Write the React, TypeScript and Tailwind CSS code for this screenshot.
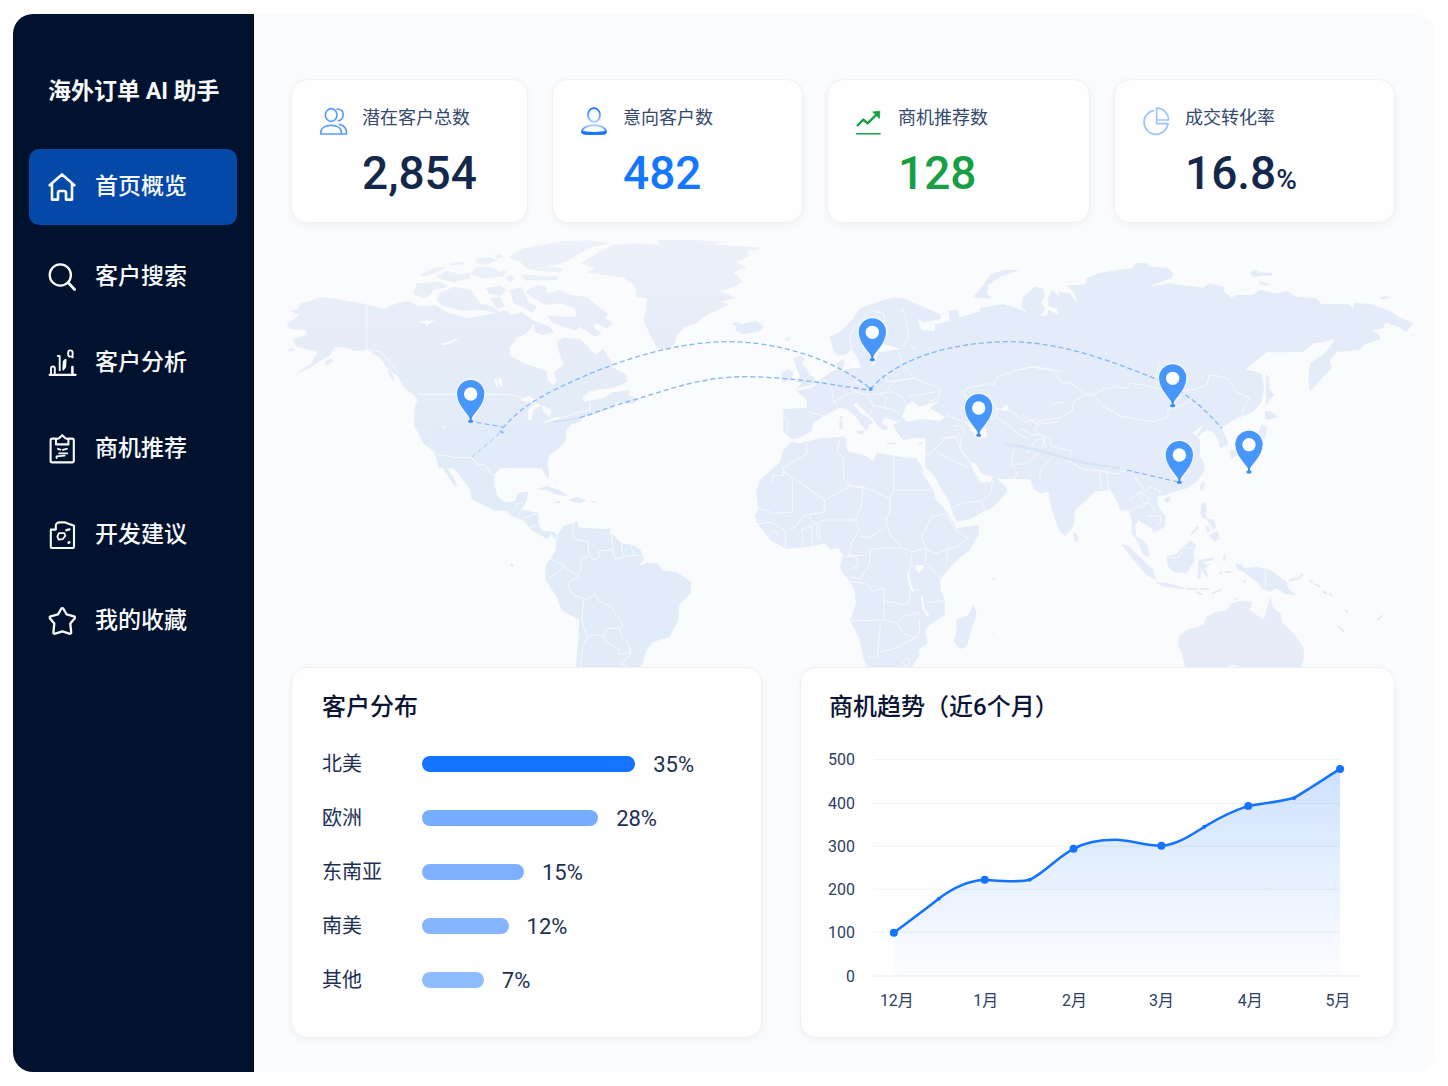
import type { ReactNode } from "react";

const stroke = {
  fill: "none",
  stroke: "currentColor",
  strokeLinecap: "round" as const,
  strokeLinejoin: "round" as const,
};

function NavIcon({ children }: { children: ReactNode }) {
  return (
    <svg viewBox="0 0 28 28" className="h-7 w-7 shrink-0 overflow-visible" strokeWidth="2.3" aria-hidden="true" {...stroke}>
      {children}
    </svg>
  );
}

function StatIcon({ children, className }: { children: ReactNode; className: string }) {
  return (
    <svg viewBox="0 0 28 28" className={`mt-[3px] h-7 w-7 shrink-0 overflow-visible ${className}`} strokeWidth="1.7" aria-hidden="true" {...stroke}>
      {children}
    </svg>
  );
}

const navItems = [
  {
    label: "首页概览",
    icon: (
      <NavIcon>
        <path d="M1.600 12.200 14 1.400l12.400 10.800M4 11v15.600h6V20a2 2 0 0 1 2-2h4a2 2 0 0 1 2 2v6.600h6V11" strokeWidth="2.600" />
      </NavIcon>
    ),
  },
  {
    label: "客户搜索",
    icon: (
      <NavIcon>
        <circle cx="12.3" cy="12" r="10.6" />
        <path d="m20 19.600 6.600 6.800" strokeWidth="2.800" />
      </NavIcon>
    ),
  },
  {
    label: "客户分析",
    icon: (
      <NavIcon>
        <g strokeWidth="1.9">
          <path d="M1.600 25.800h26" strokeWidth="2.200" />
          <path d="M3 25.600v-6.200a1.900 1.900 0 0 1 3.800 0v6.200" />
          <path d="M9.800 7h1.900v14.200" />
          <path d="m17.600 10.800-.4 7-1.900 2.600.5-8Z" />
          <path d="M24.600 8.400V3.500c0-1.300-.9-2.100-2.200-2.100s-2.200.9-2.200 2.300v1.700c0 1.400.8 2.200 2.200 2.200h2.200" />
          <path d="M24.400 18v7.600" strokeWidth="2.600" />
        </g>
      </NavIcon>
    ),
  },
  {
    label: "商机推荐",
    icon: (
      <NavIcon>
        <g strokeWidth="2.1">
          <path d="M8 3.600H4.200a1.600 1.600 0 0 0-1.600 1.600v20.600a1.600 1.600 0 0 0 1.600 1.600h20a1.600 1.600 0 0 0 1.600-1.600V5.200a1.600 1.600 0 0 0-1.600-1.600h-3.800" />
          <path d="M8 9.400V4.200l3-1L14.200.200l3.200 3 3 1v5.200Z" />
          <path d="m10 13.800 2.200.8M14.600 14.800l4.200-1M11.200 18.400h8M8.600 23v-1.600l8-.8" strokeWidth="1.900" />
        </g>
      </NavIcon>
    ),
  },
  {
    label: "开发建议",
    icon: (
      <NavIcon>
        <g strokeWidth="2.1">
          <path d="M2.800 8.600h5V4.800c0-2 1.600-3.400 4-3.400h5.400L26 4.800v21a1.200 1.200 0 0 1-1.200 1.200H4a1.200 1.200 0 0 1-1.200-1.200Z" />
          <path d="M11 12.200h5.400l1 2.600-2.800 3.400-4 .4-1.200-3.200Z" strokeWidth="1.800" />
          <path d="m18.400 9.200 3-.8M20.600 21.800l.8-.6" strokeWidth="2.400" />
        </g>
      </NavIcon>
    ),
  },
  {
    label: "我的收藏",
    icon: (
      <NavIcon>
        <path d="M13.200 1.700a1.400 1.400 0 0 1 2.200 0l3.200 5.700 7.400 1.900a1.300 1.300 0 0 1 .6 2.100l-4.300 5.200.9 8.700a1.300 1.300 0 0 1-1.900 1.300l-7-2.200-7 2.200a1.300 1.300 0 0 1-1.900-1.300l.9-8.700L2 11.400a1.300 1.300 0 0 1 .6-2.100L10 7.400Z" />
      </NavIcon>
    ),
  },
];

const stats = [
  {
    label: "潜在客户总数",
    value: "2,854",
    unit: "",
    color: "text-[#14284b]",
    icon: (
      <StatIcon className="text-[#5b9dff]">
        <ellipse cx="11.2" cy="8" rx="5.8" ry="6.4" />
        <path d="M.8 27v-1.400c0-4.400 4.200-7.200 10.400-7.200s10.200 2.800 10.200 7.200V27Z" />
        <path d="M17 2c4 0 6.200 2.200 6.200 5.400 0 2.800-1.800 5.600-4.800 6.400M19.400 17.400c4.600.8 7.200 4.200 7.200 9.600h-4.400" />
      </StatIcon>
    ),
  },
  {
    label: "意向客户数",
    value: "482",
    unit: "",
    color: "text-[#1477ff]",
    icon: (
      <StatIcon className="text-[#1477ff]">
        <defs>
          <linearGradient id="head" x1="0" y1="0" x2="0" y2="1">
            <stop offset="0" stopColor="#1477ff" />
            <stop offset="1" stopColor="#a9ccff" />
          </linearGradient>
          <linearGradient id="shoulders" x1="0" y1="0" x2="0" y2="1">
            <stop offset="0" stopColor="#a9ccff" />
            <stop offset=".7" stopColor="#1477ff" />
          </linearGradient>
        </defs>
        <ellipse cx="13" cy="8" rx="6" ry="6.800" stroke="url(#head)" strokeWidth="1.800" />
        <path d="M1 24.800c0-3.800 5-6.600 12-6.600s12 2.800 12 6.600c0 1.400-1.200 2-3 2H4c-1.800 0-3-.6-3-2Z" stroke="url(#shoulders)" />
        <path d="M2 25.400c3 1.200 19 1.200 22 0" strokeWidth="2.800" />
      </StatIcon>
    ),
  },
  {
    label: "商机推荐数",
    value: "128",
    unit: "",
    color: "text-[#16a043]",
    icon: (
      <StatIcon className="text-[#16a043]">
        <path d="m1 19 6.400-6.400 4.200 3.800L22 6" strokeWidth="2.400" strokeLinecap="butt" />
        <path d="m17 5 6.800-.8-.4 7Z" fill="currentColor" strokeWidth=".8" />
        <path d="M.6 26.800h23.600" strokeWidth="1.400" />
      </StatIcon>
    ),
  },
  {
    label: "成交转化率",
    value: "16.8",
    unit: "%",
    color: "text-[#14284b]",
    icon: (
      <StatIcon className="text-[#9fc3ff]">
        <path d="M10.400 3.600A12 12 0 1 0 25 16.600H13.600v-2" />
        <path d="M13.600 1.200A12 12 0 0 1 25.600 13H13.600Z" />
      </StatIcon>
    ),
  },
];

const regions = [
  { name: "北美", value: "35%", bar: "w-[69%] bg-[#1473ff]" },
  { name: "欧洲", value: "28%", bar: "w-[57%] bg-[#76adff]" },
  { name: "东南亚", value: "15%", bar: "w-[33%] bg-[#7db1ff]" },
  { name: "南美", value: "12%", bar: "w-[28%] bg-[#85b5ff]" },
  { name: "其他", value: "7%", bar: "w-[20%] bg-[#8fbbff]" },
];

const pins = [
  [572, 559],
  [1777, 374],
  [2096, 601],
  [2678, 512],
  [2698, 742],
  [2907, 711],
];

function WorldMap() {
  return (
    <svg viewBox="-78 -36 3543 1332" className="block h-auto w-full" role="img" aria-label="全球客户分布地图">
      <defs>
        <linearGradient id="land" gradientUnits="userSpaceOnUse" x1="0" y1="0" x2="0" y2="700">
          <stop offset="0" stopColor="#edf2f9" />
          <stop offset=".4" stopColor="#e6edf8" />
          <stop offset="1" stopColor="#e2ebf8" />
        </linearGradient>
      </defs>

      {/* North America, the Arctic islands and Greenland */}
      <g fill="url(#land)">
        <path d="M120 185 90 198 62 205 55 222 30 228 58 240 20 268 30 282 78 285 80 300 38 312 50 335 78 342 112 352 95 385 38 422 90 398 125 375 150 360 165 335 200 338 225 348 262 345 300 368 330 405 355 425 370 455 400 478 412 495 403 520 402 570 430 625 462 650 478 700 800 700 808 662 850 628 845 600 875 568 905 560 905 545 940 538 1000 518 1012 502 1060 508 1076 492 1045 480 1050 465 1000 472 970 490 915 500 905 490 930 468 1000 458 1042 440 1040 420 1000 398 990 375 970 342 945 360 925 335 900 312 850 308 830 320 838 355 852 390 820 412 830 440 818 450 802 432 800 408 740 388 690 362 688 340 710 310 740 295 765 262 750 250 725 232 690 240 680 225 640 235 565 250 500 232 470 212 415 212 385 198 350 205 310 222 260 208 215 200 160 190Z" />
        <path d="m410 145 70-5 25 15-45 10-10 15-20 10-30-12ZM480 175l40-20 55 10 25 40 40 10 20 20-60-10-50 3-70-18-10-20ZM420 120l40-22 40-3-30 17-40 13ZM470 125l30-17 45 10 25-6v18l-50 12-40-10ZM585 72l45-5 25 8-35 14-30-4ZM590 95h40l30 15 20-5-10 20-60 5-40-12ZM505 84l45-4v8l-35 3ZM640 62l20-6 10 8-15 6Z" />
        <path d="m685 65 45-25 120-22 80-2 60 9-50 10-50 25-30 20-60 15 50 5-10 12-60-4-40-8-20-20-20-5ZM720 122l20-4 60 7 35-3-5 14h-90ZM675 125l20-5 12 12-20 8ZM615 160l45-8 20 12-20 18-30-4ZM690 165l35-10 20 45 25 15-15 20-25-20-30-10ZM630 190l30-5 15 30-25 5ZM762 258l48 17 12 17-34 8-24-10ZM735 250l-10 20 22 8Z" />
        <path d="m735 170 35-20 30 5v20l40-10 30 15 50 5 40 35 25 15-10 15 25 15-20 15-30-15-10 10 25 20-20 10-45-30-15 10-35-10-30-10-20-25 50 5 40 0-5-25-45-15-40 5-30-15Z" />
        <path d="m900 85 60-35 40-20 80-5 60 5-10-15 100-1 100 6-40 8 160 10-50 12 10 12-40 18 30 18-40 12 15 15 15 15-30 15-40 15 30 10 15 10-45 10 30 8-50 22-30 15-20 20-35 10-25 25-5 25-20 20-35-7-20-38-20-45 10-30v-35l-30-5-5-35-35-22-70-10-40-6 30-12Z" />
        <path d="m300 368 18 12 14 26-14-10ZM322 402l14 10 8 30-16-22ZM135 380l20-10 4 8-20 14ZM22 343l18-4 4 8-16 2ZM372 460l30 6 20 24-18-8Z" />
      </g>

      {/* Mexico, Central America, the Caribbean and South America */}
      <g transform="translate(480 615)" fill="#e2ebf8">
        <path d="M-20-40h400l-5 45-45 37-12 16 10 37-3 23-13-18-12-28-55-6-5 10-45-4-30 28-2 35 9 33 23 20 30-4 10-26 30-3-7 30-13 25 50 8v32l10 22 35 3 12 10-7 15-10-17-15 13-45-26-25-30-35-12-15-16h-35l-70-34-5-30-30-40-40-48-20-20Z" />
        <path d="M-8 55 15 95l30 45 7-2-12-28-30-40-5-20ZM290 148l30-10 40 14 25 16-35-3-30-15ZM385 180l25-10 30 12-25 8ZM453 183h14v4h-14ZM345 184h16l-2 5h-12ZM212 370l10 4-4 8-6-4ZM348 120l6 6-4 2Z" />
        <path d="m370 258 30-8 12-7 3 19 35 3 50 3 12-4-4 18 12 3 25 25 35 5 20 13 12 27-14 23 24-10 32 3 13 20 42 5 30 20 15 10-3 35-32 30-5 50-25 50-50 15-20 25-10 35-10 20H408l7-90 3-55-53-30-15-40-35-55 3-40 27-40 5-40 5-15Z" />
      </g>

      {/* Western Eurasia */}
      <g transform="translate(1080 0)" fill="#e3ecf8">
        <path d="m275 265 20-5 5 8 50-10 22 17-17 15-45 8-25-13 5-10ZM460 370l20-8 15 8-10 15 15 15 10 20 15 10-5 18-50 12 15-15-20-5 15-15-10-25ZM425 415l20-13 15 10-5 23-30 7ZM435 312l15-6-6 14ZM598 560l10-2v22l-10 4ZM600 544l6-2v14h-6ZM644 588l28-2-6 14ZM590 385l20-12 4 10-8 22-12-2Z" />
        <path d="m1000 185 30-35 20-30 40-15h50l-60 20-35 25-5 25 15 15h-35Z" />
        <path d="m570 305 30-15 40-40 20-30 60-22 40-10 25 2 20 5-15 60-45-15-20 60-8 32-12 18-5 30-15 25-20 0-12-35-18-28-20 18-22 2-14-20Z" />
        <path d="m780 190 20 5 50 20 50 23 3 14-53 10-18-12 13 35 40 3v-20l45-10-5-30 30-3 3 23 42-13 60-13 30-14 40 17 30 15 140 5v395H862l-2-30-30-2-40 7-15-15-15-30 15-10-40-12-10 15 20 15-10 10-20-15-25-30-40-40-10 5 20 25 25 15 15 15-10 5-10 20-10-10-20-30-30-25-20-5-30 15-25 15-25 15-5 25-35 20-25 5-25-20v-70l70-5v-25l-30-25 50-12 15-18 35-25 20-10 15 5 35-10h40l25-10 5-20 5-15 70-12-55-13-5-45 10-70Z" />
      </g>

      {/* Russia, Korea, Japan */}
      <g transform="translate(2220 0)" fill="#e3ecf8">
        <path d="M-120 218-50 208 5 225 25 238 5 215 10 185 45 155 70 160 75 185 65 200 75 225 45 255 80 245 85 225 118 240 110 220 85 215 85 185 95 165 120 185 115 170 150 175 170 205 165 175 140 152 195 148 200 130 235 115 340 98 345 85 385 85 385 95 440 98 460 115 455 130 385 155 450 145 480 150 550 158 570 145 610 155 612 170 635 188 650 180 700 180 720 165 770 175 800 168 830 185 890 190 905 208 985 208 1000 220 1003 203 1055 208 1110 228 1140 248 1180 265 1160 290 1135 275 1095 262 1090 280 1055 285 1080 300 1080 312 1030 330 1020 345 950 350 930 375 935 400 905 430 870 470 865 430 870 385 910 358 930 335 945 312 905 322 880 325 850 350 790 352 740 352 675 405 700 408 725 418 732 455 725 500 700 530 640 555 605 578 620 610 625 630 600 640 595 615 580 590 560 585 530 605 550 570 515 595 540 615 540 660-150 660Z" />
        <path d="m738 415 10 15v30l14 20-17 20-7 15v-55ZM735 530l15-2 25 17-30 10-10-5ZM725 568l17 7-7 35-20 30-35 12-40 0 10-14 30-6 32-30ZM688 112l20-8 15 8 34 1-2 9h-30l-25 6ZM718 138l28 10-5 5-22-5ZM1078 188l20-6 12 5-15 7ZM1168 296l18 4-8 3Z" />
      </g>

      {/* Southern and South-East Asia, Australia */}
      <g transform="translate(2280 555)" fill="#e3ecf8">
        <path d="M-330-20h830l-45 58 15 10 15-6-25 20 20 8-10 25 20 30 5 25-25 35-30 20-50 15-15 5-25 5 5 30 23 30-3 30-35 20-5-15-25-15-15-10-10 20 5 30 20 10 15 25 3 27-18-7-15-35-20-30v-40l-10-30-25 2-8-27-22-35-45 5-25 25-35 30-5 50-25 28-15-13-25-65-10-55-25 5-20-15-10-27-100-3-70-75-130-40Z" />
        <path d="m102 335 14 15-2 15-12-2ZM245 373l20 5 45 42 30 30 8 30-28-15-40-45ZM345 487l40 3 50 13-5 5-60-8ZM378 410l32-10 20-20 20-18 18 13-8 30 5 15-25 40-40-5-15-15ZM475 420l50-8-5 8-30 5 5 10 20-5-20 15 13 25-10 0-13-20-5 28-8-3ZM485 250h12l3 20-5 12 8 16-14-4-8-14ZM498 298l22 0 10 26-12 4-6-14ZM505 345l30-12 4 24-16 9ZM496 315l12 8 2 14-10-4ZM480 195l12-12 3 10-8 20-7-6ZM375 233l15-4 2 10-10 9-8-6ZM549 408l8-4 0 12-6 14ZM570 92l18-2v18l-14 8ZM585 432l20 1 7 12 38-5 40 10 50 35 5 20 23 20-33-3-25-17-20 10-25-10-15-20-40-30-15-5ZM575 536l25-2-10 6Z" />
        <path d="M435 741 425 700 415 680 418 645 440 630 490 615 500 590 530 575 560 570 575 550 600 542 638 545 628 570 650 585 672 598 690 530 700 565 722 580 725 605 760 640 790 680 792 710 785 741H600L580 735 560 741Z" fill="#e6edf8" />
        <g fill="none" stroke="#dfe8f5" strokeWidth="5">
          <path d="M440 507h35M482 507h25M515 521l28-12M470 517l16 6M452 346l22-26M537 458h10M555 456h18M612 488l4-8M747 481l30-6 12-14M808 480l12 8M826 492l14 8M848 514l14 8M868 520l8 8M895 620l18 15M1012 600l16-14M916 570l6 8" />
        </g>
      </g>

      {/* Africa, Arabia and Iran */}
      <g transform="translate(1380 555)" fill="#e3ecf8">
        <path d="m155 65 25 5 60-15 70-5 10 8-2 22 7 15 45 10 30 17 10-24 40 7 40 7 40 3 18 28 2 18-15-20 25 39 20 30 5 25 35 40 20 30 10 20 68-10-3 30-25 45-50 40-40 50 5 40 10 20v45l-35 20-25 25 8 40-28 20 5 15-25 36H385l-15-26-13-60-27-55 18-50-3-35-15-30-25-30-5-15 10-35-15-20-25 3-15-18-50 10-65 7-50-27-42-55-3-20 10-20-7-50 12-35 60-55 10-35Z" />
        <path d="m700 552 10 33-10 25-20 70-20 7-20-22 10-30-2-35 37-15ZM755 476l8-6 5 6-10 4ZM756 642l8-3-3 6ZM440 66l32 3-6 4-24-2ZM530 70l20-4-8 8Z" />
        <path d="M556 40v100l29 30 15 30 25 40 15 45 10 20 40-7 40-23 30-13 40-45v-16l-30-25-8-16-9 25-31 3-22-38-10-22 15 0 20 32 25 10 22-10 13 17h85l20 27 15 17 20-10h70V20Z" />
      </g>

      {/* Inland seas and lakes */}
      <g fill="#fafbfc">
        <path d="m718 495 27-13 25 13-5 10-25-5ZM765 505l20 5-25 15-5 30h-12l2-30ZM785 510l30 15-5 20-20-15ZM790 560l40-15 20 3-50 14ZM480 326l26-6 34-12-24 16-30 7ZM412 262l24-4 4-8 6 8 22-2-20 10-8 8-4-8Z" />
        <path d="m640 430 10 2 8 28-10-8ZM652 424l12 12 6 20-10-4ZM490 572l6 4-3 6-5-4Z" />
        <path d="m1865 545 15-35 20-10 15 15 35-10 28-6-28 21 45 25-15 13-50-6-50 8ZM2072 502l42-2-4 45 12 60-32 4-20-34ZM2165 520l15-12 6 15-20 6ZM1890 328l20 14-8 0Z" />
        <path d="m1908 990 22 0v15l-15 8-8-10Z" />
      </g>

      {/* Borders */}
      <g fill="none" stroke="#f7fafe" strokeWidth="3" strokeLinejoin="round">
        <path d="M260 208v137l40 5 40 40 15 25M415 478h272l50 14M850 547l50-18 22-2 12-20M930 500v30" />
        <g transform="translate(480 615)">
          <path d="m-10 43 60 10 45-1 15 20 25 3 20 30h12M212 222l20-22-6-8 22-4M232 228l12-16M245 236l50-16M268 262l20-4M400 252l-2 38 14 10 32 6 4 40 14 14 16-8-2-18 40-6 4-10-6-20 8-22M516 325l10 32 30-8 50-4M550 312l-6 14 10 24M580 312l-6 12 8 20M448 350l-24 4-2 36-6 14-24-10-26-22-34-14M368 372l0 14-38 28-8-10M416 408l-28 18-4 18 18 22 26 8 10 4 30-14 8 18 40 20 10 20 20 22v22M430 480l-4 60 16 52-14 30-8 70M442 592l20-8 28 4 10-22 38-2 8 28 20 16 2 28-18 8-14-2 2-14-40-22-6-16M572 622l0 20-30 32M540 668l20 14" />
        </g>
        <g transform="translate(1080 0)">
          <path d="m635 350-5-50 30-40 30-35 40 10 5 25M785 215l15 45 5 50-15 25M775 350l10 35 40 45-85 10-5-30M740 470l20-30 60-10 80 30-5 30-25 10M580 500l60-30 50 10 70-10 30 20 10 20M550 430l25 30 5 40 20 25M505 530l55 16M680 480l20 30-10 30M700 510l60 15 20 15M720 480l20 10-10 30M655 470l-30-15M640 410l5 30 45 20M432 545l13 12-6 48M890 470l-85 15M970 470l10-10 70-15 10 5 10-25 60-20 50-10 90 15M970 470l15 30M920 540l66 26 8 20M940 570l28 6 6 20M784 556l-18 6M900 610l48-6 12 36 40 50M1050 555l20-10 70 55 25 12M1070 545l0-25 50 10 30 30 40-6" />
        </g>
        <g transform="translate(2220 0)">
          <path d="m0 405 40-10 20 8 20-4 30 20 12 22 30 4 40 28 20 10 40-20 40-8 30 5 5-15 40 4 60 14 40 4 60-4 35-14 4-26 20-2 40 10 20 38 44 20-18 26-6 36-14 20M210 475l-50 24-4 30-40 20-60 8-10 30 20 20M214 474l36 40 54 30 96 16 44-14v-22l40-14 40-16M5 540l50 28 60-8M0 580l40 20 30 0 8 40M90 515l16-12 28 0M385 440l24-20 10-40" />
        </g>
        <g transform="translate(2280 555)">
          <path d="m-40 100 30-40 40-10 4 30 62 12-8 32 40 24 50 4 50 10 36-14 24 26 22 30-8 14 28 16-20 26-34 6-14 30M178 152l6 54M200 160l8 50M300 226l30-26 30 12 0 20M300 228l12 20 20 4 14 30M318 288l44 0 0 20-16 14M268 240l36-26M390 410l24 4 16-28M430 382l36 4M676 448v64" />
        </g>
        <g transform="translate(1380 555)">
          <path d="M200 68v34l-70 40v25H98v20M132 155l122 85-2 36-62 12-30 40M158 178l0 98-62 4-16-10-26-4M300 55l-8 40 18 20 0 60 22 24 40 6M254 240l78-42M320 196l48 4 84 36M460 100v110M460 210h115M460 210l-10 30v30l-12 30 10 40 38 44M368 200l-4 60-18 40-96 0-28 14-14-28M346 300l12 30-22 36-10 40h46M358 350l32 2 46-30M374 405l14-16 46-6 54 2 30 10 36-10M575 290l40-8M575 290l-30 60 14 40 30 10 62-20 34-26-34-20-30-50M620 425l4-48M560 390l-6 36 48 48M240 360l-4-50M190 378l-4-50 30-10v60M228 312l6 50M136 384l0-50-40-28-44 6M166 320l-26 14M86 350l12-18 16 10M46 300l26 0M310 410h40l2 28-26 12M330 468l30 10 28-44 2-40M330 486l46 4 24 24 30-10 2 40 62 10 14-6v-40l36 2M432 544v56l-98 2M432 600l40 8 22-20 44-10M516 400l-4 34-8 30M558 548l56-6M470 608l24 34 34 14 10-20v-40M420 612v30l-8 50 14 4 36-10 64-32M412 692v20l-30 0M486 730l10-14 14 4-4 16-16 0M556 108l20-12 40-40 40-4M640 20l24 30-4 40 34 40M590 96l44 24 52 22M640 260l36-12 46-4 30-24 6-40M724 244l10 28M820 90l-6 40 18 30-12 20M820 132l40 0 44-40 10-40M900 180l0-30 44-46" />
        </g>
      </g>
      <path d="m1883 1012 8 40 10 18M1925 1085l6 38 14 20" fill="none" stroke="#fafbfc" strokeWidth="7" />

      {/* Trade routes */}
      <path d="M2170 627c110 8 200 60 350 72" fill="none" stroke="#d8e5f8" strokeWidth="8" />
      <g fill="none" stroke="#84b7fb" strokeWidth="4" strokeDasharray="15 9">
        <path d="M668 580C720 520 760 498 820 466 1000 378 1180 320 1350 320c170 2 330 65 422 142" />
        <path d="M900 548c60-18 90-34 150-50 110-32 210-73 350-73 150 2 260 25 372 41" />
        <path d="M1772 462c78-92 248-142 418-142 160 2 310 60 450 117 80 38 130 78 185 143" />
        <path d="m590 562 78 14M2540 705l150 35" strokeWidth="3.500" />
        <path d="m575 667 93-80" stroke="#a7cbfb" strokeWidth="3" />
      </g>
      <path d="M820 560c30-2 50-6 80-12" fill="none" stroke="#c3dafb" strokeWidth="3" />
      <circle cx="1772" cy="462" r="6" fill="#5ba0fb" />
      <path d="m660 588 10 6" stroke="#84b7fb" strokeWidth="6" />

      {pins.map(([x, y]) => (
        <g key={`${x}-${y}`} transform={`translate(${x} ${y})`}>
          <path d="M0-4c-6-18-41-44-41-79a41 41 0 1 1 82 0c0 35-35 61-41 79Z" fill="#4696fb" stroke="#f5f9ff" strokeWidth="8" paintOrder="stroke" />
          <path d="M-3-14h6V0h-6Z" fill="#3b8dfa" />
          <ellipse rx="8" ry="5" fill="#3b8dfa" />
          <circle cy="-82" r="20" fill="#fdfeff" />
        </g>
      ))}
    </svg>
  );
}

const trendLine =
  "M894 933C910 921 925 910 939 899 952 889 968 881 985 880 1000 881 1020 883 1030 880 1044 874 1058 857 1074 849 1085 843 1100 840 1116 840 1130 840 1145 846 1162 846 1178 845 1192 835 1205 827 1218 819 1234 811 1249 806 1264 804 1282 801 1295 798 1310 789 1325 779 1341 769";

const yTicks = [
  ["500", 759],
  ["400", 803],
  ["300", 846],
  ["200", 889],
  ["100", 932],
  ["0", 976],
] as const;

const months = [
  ["12月", 897, 894, 933],
  ["1月", 986, 985, 880],
  ["2月", 1075, 1074, 849],
  ["3月", 1162, 1162, 846],
  ["4月", 1251, 1249, 806],
  ["5月", 1339, 1341, 769],
] as const;

function TrendChart() {
  return (
    <svg viewBox="801 737 594 290" className="block h-auto w-full" role="img" aria-label="近6个月商机趋势">
      <defs>
        <linearGradient id="area" x1="0" y1="0" x2="0" y2="1">
          <stop offset="0" stopColor="#1473ff" stopOpacity=".21" />
          <stop offset=".6" stopColor="#1473ff" stopOpacity=".08" />
          <stop offset="1" stopColor="#1473ff" stopOpacity=".01" />
        </linearGradient>
      </defs>
      {yTicks.map(([label, y]) => (
        <g key={label}>
          <path d={`M874 ${y}.5H${label === "0" ? 1360 : 1341}`} stroke={label === "0" ? "#e6ebf3" : "#eff2f8"} strokeWidth="1" />
          <text x="855" y={y + 6} textAnchor="end" fontSize="16" fill="#2c3f63">
            {label}
          </text>
        </g>
      ))}
      <path d={`${trendLine}V976H894Z`} fill="url(#area)" />
      <path d={trendLine} fill="none" stroke="#1473ff" strokeWidth="2.600" strokeLinejoin="round" />
      {months.map(([label, labelX, x, y]) => (
        <g key={label}>
          <circle cx={x} cy={y} r="4" fill="#1473ff" />
          <text x={labelX} y="1006" textAnchor="middle" fontSize="16" fill="#2c3f63">
            {label}
          </text>
        </g>
      ))}
      {[[939, 899], [1030, 880], [1205, 827], [1295, 798]].map(([x, y]) => (
        <circle key={x} cx={x} cy={y} r="2" fill="#1473ff" />
      ))}
    </svg>
  );
}

const card = "rounded-2xl border border-[#eef1f6] bg-[#fefeff] shadow-[0_2px_6px_rgba(30,50,90,0.05)]";

export default function App() {
  return (
    <div className="min-h-screen bg-[#fefefe] px-[13px] py-3.5 font-['Roboto','Noto_Sans_CJK_SC',sans-serif] text-[#14284b]">
      <div className="flex overflow-hidden rounded-[20px] bg-[#fafbfc]">
        <aside className="w-[241px] shrink-0 border-r border-black bg-[#00122d] px-4 pt-[60px] text-[#f7f9fc]">
          <h1 className="whitespace-nowrap pl-[19px] text-[23px] font-bold leading-9">海外订单 AI 助手</h1>
          <nav className="mt-[39px] flex flex-col gap-2.5" aria-label="主导航">
            {navItems.map((item, i) => (
              <a
                key={item.label}
                href="#"
                aria-current={i === 0 ? "page" : undefined}
                className={`flex h-[76px] items-center gap-[19px] rounded-[10px] pl-[19px] text-[23px] font-medium leading-8 ${i === 0 ? "mb-1 bg-[#0448a8]" : ""}`}
              >
                {item.icon}
                {item.label}
              </a>
            ))}
          </nav>
        </aside>

        <main className="min-w-0 flex-1 pb-[34px] pt-[65px]">
          <section className="grid grid-cols-[237fr_251fr_263fr_281fr] gap-6 pl-[37px] pr-10">
            {stats.map((s) => (
              <div key={s.label} className={`flex gap-3.5 pb-[21px] pl-7 pt-6 ${card}`}>
                {s.icon}
                <div>
                  <h2 className="whitespace-nowrap text-lg leading-7 text-[#34486c]">{s.label}</h2>
                  <p className={`mt-[13px] whitespace-nowrap text-[46px] font-medium leading-[56px] ${s.color}`}>
                    {s.value}
                    {s.unit && <span className="text-[28px] leading-none">{s.unit}</span>}
                  </p>
                </div>
              </div>
            ))}
          </section>

          <WorldMap />

          <section className="grid grid-cols-[471fr_595fr] gap-[38px] pl-[37px] pr-10">
            <div className={`pb-[30px] pl-[30px] pr-[30px] pt-[21px] ${card}`}>
              <h2 className="text-2xl font-medium leading-9 text-[#0a1633]">客户分布</h2>
              <ul className="mt-3">
                {regions.map((r) => (
                  <li key={r.name} className="flex h-[54px] items-center text-[#1d3054]">
                    <span className="w-[100px] shrink-0 text-xl">{r.name}</span>
                    <span className="flex flex-1 items-center gap-[18px]">
                      <span className={`h-4 rounded-full ${r.bar}`} />
                      <span className="text-[22px]">{r.value}</span>
                    </span>
                  </li>
                ))}
              </ul>
            </div>
            <div className={`pt-[21px] ${card}`}>
              <h2 className="pl-7 text-2xl font-medium leading-9 text-[#0a1633]">商机趋势（近6个月）</h2>
              <div className="mt-3">
                <TrendChart />
              </div>
            </div>
          </section>
        </main>
      </div>
    </div>
  );
}
